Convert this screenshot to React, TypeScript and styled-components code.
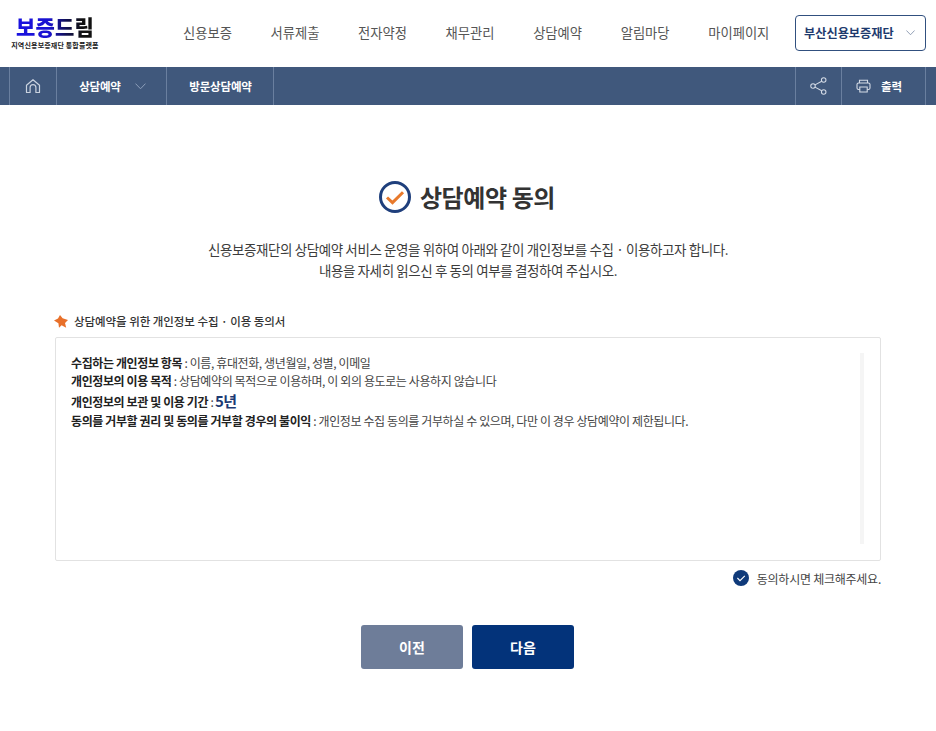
import React from "react";
import styled, { createGlobalStyle } from "styled-components";

const Global = createGlobalStyle`
  html, body { margin: 0; padding: 0; background: #fff; }
  body { font-family: "Noto Sans CJK KR", "Noto Sans", sans-serif; color: #333; }
  * { box-sizing: border-box; }
`;

const Page = styled.div`
  width: 936px;
  height: 731px;
  overflow: hidden;
`;

const Header = styled.header`
  height: 67px;
  display: flex;
  align-items: center;
  padding: 0 10px 0 11px;
`;

const Logo = styled.div`
  width: 88px;
  display: flex;
  flex-direction: column;
  align-items: center;
  gap: 2px;
  margin-top: -3px;
`;

const LogoMark = styled.div`
  font-size: 21px;
  line-height: 24px;
  font-weight: 900;
  letter-spacing: 0.2px;
  white-space: nowrap;
  background: linear-gradient(90deg, #1a12e0 0%, #1a12d0 42%, #101050 65%, #111 85%);
  -webkit-background-clip: text;
  background-clip: text;
  color: transparent;
`;

const LogoTag = styled.div`
  font-size: 7px;
  line-height: 10px;
  font-weight: 700;
  letter-spacing: 0.15px;
  color: #222;
  white-space: nowrap;
`;

const Nav = styled.nav`
  flex: 1;
  display: flex;
  justify-content: flex-start;
  padding-left: 84px;
  gap: 38.6px;
  margin-top: -1px;
`;

const NavItem = styled.a`
  font-size: 13.3px;
  line-height: 20px;
  color: #555;
  white-space: nowrap;
`;

const OrgSelect = styled.div`
  width: 131px;
  height: 36px;
  border: 1px solid #31507f;
  border-radius: 4px;
  display: flex;
  align-items: center;
  justify-content: space-between;
  padding: 0 10px 0 8px;
  font-size: 12.2px;
  font-weight: 700;
  color: #1e3a6e;
  white-space: nowrap;
  margin-top: -1px;
`;

const SubBar = styled.div`
  height: 38px;
  background: #40587c;
  display: flex;
  padding: 0 10px 0 9px;
  color: #fff;
`;

const SubCell = styled.div<{ $w: number; $end?: boolean; $gap?: number; $pr?: number; $pl?: number }>`
  width: ${(p) => p.$w}px;
  height: 100%;
  display: flex;
  align-items: center;
  justify-content: center;
  gap: ${(p) => p.$gap ?? 14}px;
  padding-right: ${(p) => p.$pr ?? 0}px;
  padding-left: ${(p) => p.$pl ?? 0}px;
  border-left: 1px solid #6a7f9f;
  border-right: ${(p) => (p.$end ? "1px solid #6a7f9f" : "none")};
  font-size: 11.5px;
  font-weight: 700;
  letter-spacing: -0.2px;
  white-space: nowrap;
`;

const SubSpacer = styled.div`
  width: 522px;
  border-left: 1px solid #6a7f9f;
`;

const Main = styled.main`
  padding: 0 55px;
`;

const TitleRow = styled.div`
  margin-top: 75px;
  height: 34px;
  display: flex;
  align-items: center;
  justify-content: center;
  gap: 9px;
  padding-right: 2px;
`;

const Title = styled.h2`
  margin: 0;
  font-size: 24px;
  line-height: 34px;
  font-weight: 700;
  letter-spacing: -0.4px;
  color: #333;
`;

const Lead = styled.p`
  margin: 25px 0 0;
  text-align: center;
  font-size: 13.5px;
  line-height: 21px;
  letter-spacing: -0.4px;
  color: #3c3c3c;
`;

const SectionHead = styled.div`
  margin-top: 31px;
  height: 18px;
  display: flex;
  align-items: center;
  gap: 6px;
  margin-left: -1px;
  font-size: 11.5px;
  font-weight: 500;
  letter-spacing: -0.05px;
  color: #333;
`;

const AgreeBox = styled.div`
  margin-top: 7px;
  height: 224px;
  width: 826px;
  border: 1px solid #e2e2e2;
  border-radius: 2px;
  padding: 16px 15px;
  position: relative;
`;

const ScrollTrack = styled.div`
  position: absolute;
  right: 16px;
  top: 15px;
  width: 4px;
  height: 191px;
  background: #f5f5f5;
`;

const Line = styled.div<{ $h?: number }>`
  font-size: 12px;
  line-height: ${(p) => p.$h ?? 19}px;
  height: ${(p) => p.$h ?? 19}px;
  letter-spacing: -0.39px;
  color: #444;
  white-space: nowrap;
`;

const Strong = styled.b`
  font-weight: 700;
  color: #222;
`;

const Emph = styled.b`
  font-size: 15px;
  font-weight: 700;
  color: #1d3a73;
  margin-left: 1.5px;
`;

const CheckRow = styled.label`
  margin-top: 8px;
  width: 826px;
  height: 18px;
  display: flex;
  justify-content: flex-end;
  align-items: center;
  gap: 8px;
  font-size: 12px;
  letter-spacing: -0.25px;
  color: #444;
`;

const Buttons = styled.div`
  margin-top: 38px;
  width: 825px;
  display: flex;
  justify-content: center;
  gap: 9px;
`;

const Btn = styled.button<{ $primary?: boolean }>`
  width: 102px;
  height: 44px;
  border: 0;
  border-radius: 3px;
  background: ${(p) => (p.$primary ? "#03337a" : "#6e7d99")};
  color: #fff;
  font-family: inherit;
  font-size: 14px;
  font-weight: 700;
`;

const Home = () => (
  <svg width="16" height="16" viewBox="0 0 16 16" fill="none" stroke="#c9d2df" strokeWidth="1.2">
    <path d="M1.5 7.2 8 1.7l6.5 5.5V14.5h-3.6V9.6a2.9 2.9 0 0 0-5.8 0v4.9H1.5Z" strokeLinejoin="round" />
  </svg>
);

const Chevron = ({ color, size = 11 }: { color: string; size?: number }) => (
  <svg width={size} height={size * 0.6} viewBox="0 0 11 6.6" fill="none" stroke={color} strokeWidth="1">
    <path d="M.5.6 5.5 5.8 10.5.6" />
  </svg>
);

const Share = () => (
  <svg width="17" height="18" viewBox="0 0 18 19" fill="none" stroke="#d4dbe6" strokeWidth="1.1">
    <circle cx="3.2" cy="9.5" r="2.4" />
    <circle cx="14.5" cy="3.2" r="2.4" />
    <circle cx="14.5" cy="15.8" r="2.4" />
    <path d="M5.3 8.3 12.4 4.4M5.3 10.7l7.1 3.9" />
  </svg>
);

const Printer = () => (
  <svg width="15" height="14" viewBox="0 0 15 14" fill="none" stroke="#d4dbe6" strokeWidth="1.1">
    <path d="M3.5 4V1.2h8V4" />
    <rect x="1" y="4" width="13" height="6.5" rx="1.6" />
    <path d="M3.8 8h7.4v5H3.8z" fill="#40587c" />
  </svg>
);

const TitleCheck = () => (
  <svg width="32" height="32" viewBox="0 0 32 32" fill="none">
    <circle cx="16" cy="16" r="14.5" stroke="#1f3f7c" strokeWidth="3" />
    <path d="M8 16.5 13.5 21.6 24 11.2" stroke="#e8792b" strokeWidth="3" />
  </svg>
);

const Pin = () => (
  <svg width="14" height="13" viewBox="0 0 14 13">
    <path d="M6 0 8.6 3.3 14 4.9 11 8l1.2 4.8L7.6 10.3 5 12.8 4.4 8.2 0 5.6 4 3.4Z" fill="#e8702a" />
  </svg>
);

const CheckCircle = () => (
  <svg width="16" height="16" viewBox="0 0 16 16" fill="none">
    <circle cx="8" cy="8" r="8" fill="#0f3a7a" />
    <path d="M4.4 8 7 10.6 11.8 5.8" stroke="#fff" strokeWidth="1.1" />
  </svg>
);

const navItems = ["신용보증", "서류제출", "전자약정", "채무관리", "상담예약", "알림마당", "마이페이지"];

export default function App() {
  return (
    <Page>
      <Global />
      <Header>
        <Logo>
          <LogoMark>보증드림</LogoMark>
          <LogoTag>지역신용보증재단 통합플랫폼</LogoTag>
        </Logo>
        <Nav>
          {navItems.map((n) => (
            <NavItem key={n}>{n}</NavItem>
          ))}
        </Nav>
        <OrgSelect>
          부산신용보증재단
          <Chevron color="#7a8aa5" size={9} />
        </OrgSelect>
      </Header>
      <SubBar>
        <SubCell $w={47}>
          <Home />
        </SubCell>
        <SubCell $w={110} $pl={2}>
          상담예약
          <Chevron color="#8ea0bb" />
        </SubCell>
        <SubCell $w={107} $pl={1}>방문상담예약</SubCell>
        <SubSpacer />
        <SubCell $w={46}>
          <Share />
        </SubCell>
        <SubCell $w={85} $end $gap={10} $pr={9}>
          <Printer />
          출력
        </SubCell>
      </SubBar>
      <Main>
        <TitleRow>
          <TitleCheck />
          <Title>상담예약 동의</Title>
        </TitleRow>
        <Lead>
          신용보증재단의 상담예약 서비스 운영을 위하여 아래와 같이 개인정보를 수집 · 이용하고자 합니다.
          <br />
          내용을 자세히 읽으신 후 동의 여부를 결정하여 주십시오.
        </Lead>
        <SectionHead>
          <Pin />
          상담예약을 위한 개인정보 수집 · 이용 동의서
        </SectionHead>
        <AgreeBox>
          <ScrollTrack />
          <Line $h={18}>
            <Strong>수집하는 개인정보 항목</Strong> : 이름, 휴대전화, 생년월일, 성별, 이메일
          </Line>
          <Line $h={18}>
            <Strong>개인정보의 이용 목적</Strong> : 상담예약의 목적으로 이용하며, 이 외의 용도로는 사용하지 않습니다
          </Line>
          <Line $h={21}>
            <Strong>개인정보의 보관 및 이용 기간</Strong> :<Emph>5년</Emph>
          </Line>
          <Line $h={19}>
            <Strong>동의를 거부할 권리 및 동의를 거부할 경우의 불이익</Strong> : 개인정보 수집 동의를 거부하실 수 있으며, 다만 이 경우 상담예약이 제한됩니다.
          </Line>
        </AgreeBox>
        <CheckRow>
          <CheckCircle />
          동의하시면 체크해주세요.
        </CheckRow>
        <Buttons>
          <Btn>이전</Btn>
          <Btn $primary>다음</Btn>
        </Buttons>
      </Main>
    </Page>
  );
}
